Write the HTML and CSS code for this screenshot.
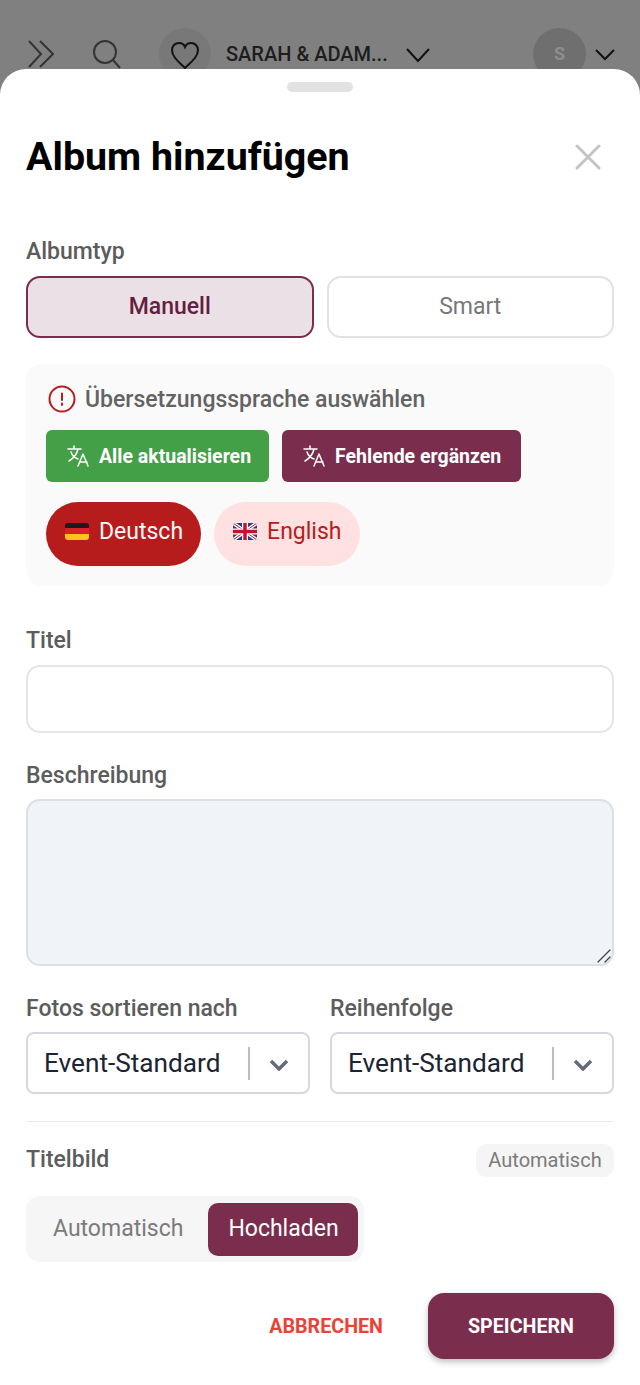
FILE: index.html
```html
<!DOCTYPE html>
<html lang="de">

<head>
    <meta charset="UTF-8">
    <title>Album hinzufügen</title>
    <link rel="stylesheet" href="styles.css">
</head>

<body>

    <header class="topbar">
        <svg class="ico-nav" width="30" height="30" viewBox="0 0 30 30"><path d="M2 2l12 13L2 28M13 2l13 13-13 13" /></svg>
        <svg class="ico-search" width="30" height="30" viewBox="0 0 30 30"><circle cx="13" cy="13" r="11" /><path d="M21 21l7 8" /></svg>
        <div class="event-logo">
            <svg width="30" height="28" viewBox="0 0 30 28"><path d="M15 27C9 21 2 16 2 9c0-4 3-7 7-7 3 0 5 1.500 6 4 1-2.500 3-4 6-4 4 0 7 3 7 7 0 7-7 12-13 18z" /></svg>
        </div>
        <span class="event-name">SARAH &amp; ADAM...</span>
        <svg class="ico-chev" width="24" height="16" viewBox="0 0 24 16"><path d="M1 2l11 12L23 2" /></svg>
        <div class="avatar">S</div>
        <svg class="ico-chev-small" width="20" height="14" viewBox="0 0 20 14"><path d="M1 2l9 9 9-9" /></svg>
    </header>

    <main class="sheet">
        <div class="handle"></div>

        <div class="sheet-head">
            <h1>Album hinzufügen</h1>
            <svg class="close" width="26" height="26" viewBox="0 0 26 26"><path d="M2 2l22 22M24 2L2 24" /></svg>
        </div>

        <div class="label label-first">Albumtyp</div>
        <div class="type-row">
            <button class="type-btn active">Manuell</button>
            <button class="type-btn">Smart</button>
        </div>

        <section class="lang-panel">
            <div class="lang-title">
                <svg width="28" height="28" viewBox="0 0 28 28"><circle cx="14" cy="14" r="12.500" /><path d="M14 8.500v6.500M14 18.500v1.500" /></svg>
                <span>Übersetzungssprache auswählen</span>
            </div>
            <div class="lang-actions">
                <button class="action-btn green">
                    <svg class="ico-translate" width="24" height="24" viewBox="0 0 24 24"><path d="M1 5h13M7 2v3M11 5c-1 5-4 9-9 12M4 8c1 3 4 6 7 7M11 22l5-12 5 12M13 18h7" /></svg>
                    Alle aktualisieren
                </button>
                <button class="action-btn plum">
                    <svg class="ico-translate" width="24" height="24" viewBox="0 0 24 24"><path d="M1 5h13M7 2v3M11 5c-1 5-4 9-9 12M4 8c1 3 4 6 7 7M11 22l5-12 5 12M13 18h7" /></svg>
                    Fehlende ergänzen
                </button>
            </div>
            <div class="lang-pills">
                <button class="pill selected">
                    <span class="flag flag-de"><i></i><i></i><i></i></span>
                    Deutsch
                </button>
                <button class="pill">
                    <svg class="flag" width="24" height="17" viewBox="0 0 24 17">
                        <rect width="24" height="17" fill="#2b3f7e" />
                        <path d="M0 0l24 17M24 0L0 17" stroke="#fff" stroke-width="3.500" />
                        <path d="M0 0l24 17M24 0L0 17" stroke="#c8102e" stroke-width="1" />
                        <path d="M12 0v17M0 8.500h24" stroke="#fff" stroke-width="6" />
                        <path d="M12 0v17M0 8.500h24" stroke="#c8102e" stroke-width="3.500" />
                    </svg>
                    English
                </button>
            </div>
        </section>

        <div class="label label-titel">Titel</div>
        <div class="input"></div>

        <div class="label label-desc">Beschreibung</div>
        <div class="textarea">
            <svg class="grip" width="14" height="14" viewBox="0 0 14 14"><path d="M1 13L13 1M8 13l5-5" /></svg>
        </div>

        <div class="sort-row">
            <div>
                <div class="label">Fotos sortieren nach</div>
                <div class="select">
                    <span class="select-value">Event-Standard</span>
                    <span class="select-sep"></span>
                    <svg width="20" height="12" viewBox="0 0 20 12"><path d="M2 2l8 8 8-8" /></svg>
                </div>
            </div>
            <div>
                <div class="label">Reihenfolge</div>
                <div class="select">
                    <span class="select-value">Event-Standard</span>
                    <span class="select-sep"></span>
                    <svg width="20" height="12" viewBox="0 0 20 12"><path d="M2 2l8 8 8-8" /></svg>
                </div>
            </div>
        </div>

        <hr class="divider">

        <div class="cover-head">
            <span class="label">Titelbild</span>
            <span class="badge">Automatisch</span>
        </div>

        <div class="segment">
            <button class="seg-btn">Automatisch</button>
            <button class="seg-btn active">Hochladen</button>
        </div>

        <div class="footer">
            <button class="cancel">ABBRECHEN</button>
            <button class="save">SPEICHERN</button>
        </div>
    </main>

</body>

</html>
```

FILE: styles.css
```css
* {
    box-sizing: border-box;
    font-family: Roboto, sans-serif;
    margin: 0;
    padding: 0;
}

html,
body {
    height: 1385px;
    overflow: hidden;
}

body {
    background-color: #808080;
}

button {
    border: 0;
    background: none;
    cursor: pointer;
}

svg {
    fill: none;
    stroke-linecap: round;
    stroke-linejoin: round;
}

/* dimmed page behind the sheet */
.topbar {
    height: 69px;
    display: flex;
    align-items: flex-start;
    padding-top: 28px;
    color: #1d1d1d;
}

.topbar svg {
    stroke: #333;
    stroke-width: 2;
    stroke-linecap: butt;
    stroke-linejoin: miter;
    flex: none;
}

.ico-nav {
    margin: 11px 0 0 27px;
}

.ico-search {
    margin: 11px 0 0 35px;
}

.event-logo {
    width: 52px;
    height: 52px;
    margin-left: 37px;
    border-radius: 50%;
    background-color: #787878;
    display: flex;
    align-items: center;
    justify-content: center;
}

.topbar .event-logo svg {
    stroke: #111;
    margin-top: 2px;
}

.event-name {
    margin: 15px 0 0 15px;
    width: 170px;
    font-size: 20px;
    font-weight: 500;
    line-height: 23px;
    white-space: nowrap;
}

.ico-chev {
    margin: 19px 0 0 10px;
}

.topbar .ico-chev,
.topbar .ico-chev-small {
    stroke: #111;
}

.avatar {
    width: 53px;
    height: 52px;
    margin-left: 103px;
    border-radius: 50%;
    background-color: #6f6f6f;
    color: #8e8e8e;
    font-size: 18px;
    font-weight: 700;
    line-height: 52px;
    text-align: center;
}

.ico-chev-small {
    margin: 20px 0 0 9px;
}

/* bottom sheet */
.sheet {
    height: 1316px;
    padding: 13px 26px 0;
    background-color: #fff;
    border-radius: 26px 26px 0 0;
    position: relative;
}

.handle {
    width: 66px;
    height: 10px;
    margin: 0 auto;
    background-color: #e2e2e2;
    border-radius: 5px;
}

.sheet-head {
    height: 46px;
    margin-top: 42px;
    display: flex;
    align-items: center;
    justify-content: space-between;
}

.sheet-head h1 {
    font-size: 39.400px;
    font-weight: 700;
    line-height: 46px;
    color: #000;
}

.close {
    margin-right: 13px;
    stroke: #c4c4c4;
    stroke-width: 3;
}

.label {
    display: block;
    height: 26px;
    font-size: 23px;
    font-weight: 500;
    line-height: 26px;
    color: #5c5c5c;
}

.label-first {
    margin-top: 59px;
}

.type-row {
    display: grid;
    grid-template-columns: 1fr 1fr;
    gap: 13px;
    margin-top: 11px;
}

.type-btn {
    height: 62px;
    padding-bottom: 2px;
    border: 2px solid #e2e2e2;
    border-radius: 14px;
    background-color: #fff;
    color: #777;
    font-size: 23px;
}

.type-btn.active {
    border-color: #7b2d4e;
    background-color: #ebe0e5;
    color: #641f40;
    font-weight: 500;
}

.lang-panel {
    height: 222px;
    margin-top: 26px;
    padding: 20px;
    background-color: #fafafa;
    border-radius: 16px;
}

.lang-title {
    display: flex;
    align-items: center;
    gap: 9px;
    height: 30px;
    padding-left: 2px;
    font-size: 23px;
    font-weight: 500;
    color: #636363;
}

.lang-title svg {
    stroke: #b71c1c;
    stroke-width: 2;
    flex: none;
}

.lang-actions {
    display: flex;
    gap: 13px;
    margin-top: 16px;
}

.action-btn {
    height: 52px;
    padding-left: 21px;
    display: flex;
    align-items: center;
    gap: 8px;
    border-radius: 6px;
    color: #fff;
    font-size: 19.500px;
    font-weight: 700;
}

.ico-translate {
    stroke: #fff;
    stroke-width: 1.500;
    flex: none;
}

.green {
    padding-right: 18px;
    background-color: #43a047;
}

.plum {
    padding-right: 20px;
    background-color: #7b2d4e;
}

.lang-pills {
    display: flex;
    gap: 13px;
    margin-top: 20px;
}

.pill {
    height: 64px;
    padding: 0 18px 6px 19px;
    display: flex;
    align-items: center;
    gap: 10px;
    border-radius: 32px;
    background-color: #ffe1e1;
    color: #b71c1c;
    font-size: 23px;
}

.pill.selected {
    background-color: #b71c1c;
    color: #fffafa;
}

.flag {
    width: 24px;
    height: 17px;
    flex: none;
    border-radius: 3px;
}

.flag-de {
    display: flex;
    flex-direction: column;
    overflow: hidden;
}

.flag-de i {
    flex: 1;
}

.flag-de i:nth-child(1) {
    background-color: #1a1a1a;
}

.flag-de i:nth-child(2) {
    background-color: #d81f26;
}

.flag-de i:nth-child(3) {
    background-color: #fcc419;
}

.label-titel {
    margin-top: 42px;
}

.input {
    height: 68px;
    margin-top: 11px;
    border: 2px solid #e3e5e8;
    border-radius: 14px;
    background-color: #fff;
}

.label-desc {
    margin-top: 30px;
}

.textarea {
    height: 167px;
    margin-top: 10px;
    border: 2px solid #dcdfe4;
    border-radius: 14px;
    background-color: #f0f4f9;
    display: flex;
    align-items: flex-end;
    justify-content: flex-end;
}

.grip {
    stroke: #444;
    stroke-width: 1.300;
    margin: 0 1px 1px 0;
}

.sort-row {
    display: grid;
    grid-template-columns: 284px 284px;
    gap: 20px;
    margin-top: 30px;
}

.sort-row .select {
    margin-top: 10px;
}

.select {
    height: 62px;
    padding-left: 16px;
    display: flex;
    align-items: center;
    border: 2px solid #d5d8dc;
    border-radius: 8px;
    background-color: #fff;
}

.select-value {
    width: 204px;
    font-size: 26.200px;
    line-height: 30px;
    color: #1c2333;
}

.select-sep {
    width: 1.500px;
    height: 33px;
    background-color: #b9bcc2;
}

.select svg {
    margin-left: 19px;
    margin-top: 3px;
    stroke: #666b7a;
    stroke-width: 3.500;
    stroke-linecap: butt;
    stroke-linejoin: miter;
}

.divider {
    height: 1px;
    margin-top: 27px;
    border: 0;
    background-color: #e9e9e9;
}

.cover-head {
    height: 33px;
    margin-top: 22px;
    display: flex;
    align-items: center;
    justify-content: space-between;
}

.cover-head .label {
    margin-bottom: 2px;
}

.badge {
    width: 138px;
    height: 33px;
    background-color: #f5f5f5;
    border-radius: 10px;
    color: #7b7b7b;
    font-size: 20px;
    line-height: 33px;
    text-align: center;
}

.segment {
    width: 338px;
    height: 66px;
    margin-top: 19px;
    padding: 7px 6px;
    display: flex;
    justify-content: space-between;
    background-color: #f6f6f6;
    border-radius: 14px;
}

.seg-btn {
    height: 53px;
    padding: 0 20px 2px 21px;
    border-radius: 10px;
    color: #7b7b7b;
    font-size: 23px;
}

.seg-btn.active {
    width: 150px;
    padding: 0 0 2px 1px;
    background-color: #7b2d4e;
    color: #fff;
}

.footer {
    margin-top: 31px;
    display: flex;
    align-items: center;
    justify-content: flex-end;
    gap: 45px;
}

.cancel {
    color: #ea4335;
    font-size: 19.700px;
    font-weight: 700;
}

.save {
    width: 186px;
    height: 66px;
    background-color: #7b2d4e;
    border-radius: 16px;
    box-shadow: 0 3px 6px rgba(0, 0, 0, 0.25);
    color: #fff;
    font-size: 19.700px;
    font-weight: 700;
}
```
